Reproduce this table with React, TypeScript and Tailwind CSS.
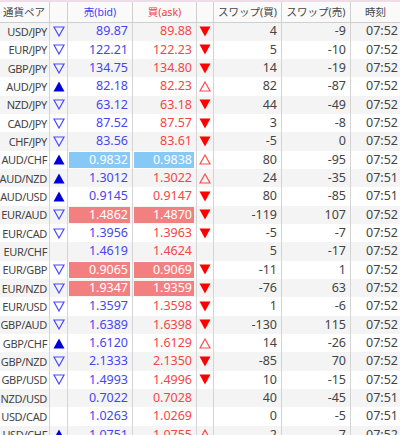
import React from "react";

type A1 = "o" | "f" | "";
type Row = [string, A1, string, string, "" | "b" | "r", A1, string, string, string];

const rows: Row[] = [
  ["USD/JPY", "o", "89.87", "89.88", "", "f", "4", "-9", "07:52"],
  ["EUR/JPY", "o", "122.21", "122.23", "", "f", "5", "-10", "07:52"],
  ["GBP/JPY", "o", "134.75", "134.80", "", "f", "14", "-19", "07:52"],
  ["AUD/JPY", "f", "82.18", "82.23", "", "o", "82", "-87", "07:52"],
  ["NZD/JPY", "o", "63.12", "63.18", "", "f", "44", "-49", "07:52"],
  ["CAD/JPY", "o", "87.52", "87.57", "", "f", "3", "-8", "07:52"],
  ["CHF/JPY", "o", "83.56", "83.61", "", "f", "-5", "0", "07:52"],
  ["AUD/CHF", "f", "0.9832", "0.9838", "b", "o", "80", "-95", "07:52"],
  ["AUD/NZD", "f", "1.3012", "1.3022", "", "o", "24", "-35", "07:51"],
  ["AUD/USD", "f", "0.9145", "0.9147", "", "f", "80", "-85", "07:51"],
  ["EUR/AUD", "o", "1.4862", "1.4870", "r", "f", "-119", "107", "07:52"],
  ["EUR/CAD", "o", "1.3956", "1.3963", "", "f", "-5", "-7", "07:52"],
  ["EUR/CHF", "", "1.4619", "1.4624", "", "", "5", "-17", "07:52"],
  ["EUR/GBP", "o", "0.9065", "0.9069", "r", "f", "-11", "1", "07:52"],
  ["EUR/NZD", "o", "1.9347", "1.9359", "r", "f", "-76", "63", "07:52"],
  ["EUR/USD", "o", "1.3597", "1.3598", "", "f", "1", "-6", "07:52"],
  ["GBP/AUD", "o", "1.6389", "1.6398", "", "f", "-130", "115", "07:52"],
  ["GBP/CHF", "f", "1.6120", "1.6129", "", "o", "14", "-26", "07:52"],
  ["GBP/NZD", "o", "2.1333", "2.1350", "", "f", "-85", "70", "07:52"],
  ["GBP/USD", "o", "1.4993", "1.4996", "", "f", "10", "-15", "07:52"],
  ["NZD/USD", "", "0.7022", "0.7028", "", "", "40", "-45", "07:51"],
  ["USD/CAD", "", "1.0263", "1.0269", "", "", "0", "-5", "07:51"],
  ["USD/CHF", "f", "1.0751", "1.0755", "", "o", "2", "-7", "07:52"],
];

const cols = "grid grid-cols-[50px_18px_65px_64px_17px_68px_69px_49px]";

function BlueArrow({ t }: { t: A1 }) {
  if (t === "f")
    return (
      <svg width="12" height="11" viewBox="0 0 12 11">
        <polygon points="6,0.5 11.5,10.5 0.5,10.5" fill="#0000dd" />
      </svg>
    );
  if (t === "o")
    return (
      <svg width="12" height="11" viewBox="0 0 12 11">
        <polygon points="1,1 11,1 6,10" fill="none" stroke="#4a4aff" strokeWidth="1.2" />
      </svg>
    );
  return null;
}

function RedArrow({ t }: { t: A1 }) {
  if (t === "f")
    return (
      <svg width="12" height="11" viewBox="0 0 12 11">
        <polygon points="0.5,0.5 11.5,0.5 6,10.5" fill="#ff0000" />
      </svg>
    );
  if (t === "o")
    return (
      <svg width="12" height="11" viewBox="0 0 12 11">
        <polygon points="6,1 11,10 1,10" fill="none" stroke="#ff4a4a" strokeWidth="1.2" />
      </svg>
    );
  return null;
}

function Price({ v, hl, color }: { v: string; hl: string; color: string }) {
  if (hl) {
    return (
      <div className="border-r border-[#d4d4d4] py-[1.5px] pl-[1px] pr-[2px] h-full">
        <div
          className={`h-full flex items-center justify-end pr-[2px] text-white ${
            hl === "b" ? "bg-[#86c8f6]" : "bg-[#f28080]"
          }`}
        >
          {v}
        </div>
      </div>
    );
  }
  return (
    <div className={`border-r border-[#d4d4d4] flex items-center justify-end pr-[4px] ${color}`}>{v}</div>
  );
}

export default function App() {
  return (
    <div
      className="w-[400px] h-[435px] overflow-hidden bg-white text-[12.5px] text-[#444]"
      style={{ fontFamily: '"Noto Sans", "Noto Sans CJK JP", sans-serif' }}
    >
      <div className="h-[2px] bg-[#eedde6]" />
      <div className={`${cols} h-[20.5px] border-b border-[#cfcfcf] bg-[#fafafa] leading-none text-[10.5px] whitespace-nowrap`}>
        <div className="border-r border-[#cfcfcf] flex items-center pl-[3px]">通貨ペア</div>
        <div className="border-r border-[#cfcfcf]" />
        <div className="border-r border-[#cfcfcf] flex items-center justify-center text-[#3b3bf5]">売(bid)</div>
        <div className="border-r border-[#cfcfcf] flex items-center justify-center text-[#f53b3b]">買(ask)</div>
        <div className="border-r border-[#cfcfcf]" />
        <div className="border-r border-[#cfcfcf] flex items-center justify-center">スワップ(買)</div>
        <div className="border-r border-[#cfcfcf] flex items-center justify-center">スワップ(売)</div>
        <div className="flex items-center justify-center">時刻</div>
      </div>
      {rows.map((r, i) => (
        <div
          key={i}
          className={`${cols} h-[18.33px] leading-none ${i % 2 === 1 ? "bg-white" : "bg-[#f4f4f4]"}`}
        >
          <div className="border-r border-[#d4d4d4] flex items-center justify-end pr-[2px] whitespace-nowrap text-[11px] tracking-[-0.35px]">
            {r[0]}
          </div>
          <div className="border-r border-[#d4d4d4] flex items-center justify-center">
            <BlueArrow t={r[1]} />
          </div>
          <Price v={r[2]} hl={r[4]} color="text-[#4646f0]" />
          <Price v={r[3]} hl={r[4]} color="text-[#f54646]" />
          <div className="border-r border-[#d4d4d4] flex items-center justify-center">
            <RedArrow t={r[5]} />
          </div>
          <div className="border-r border-[#d4d4d4] flex items-center justify-end pr-[4px]">{r[6]}</div>
          <div className="border-r border-[#d4d4d4] flex items-center justify-end pr-[4px]">{r[7]}</div>
          <div className="flex items-center justify-end pr-[2px]">{r[8]}</div>
        </div>
      ))}
    </div>
  );
}
